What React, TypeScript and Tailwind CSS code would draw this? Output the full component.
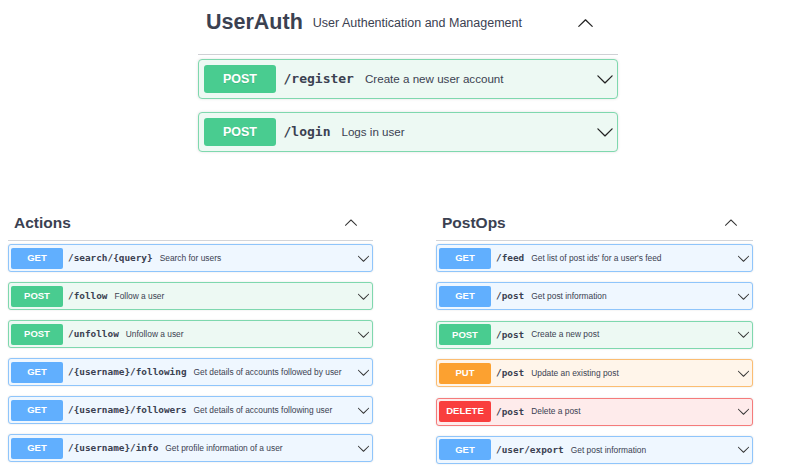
import clsx from 'clsx'

// ── Method colours (swagger-ish) ──────────────────────────────

type Method = 'GET' | 'POST' | 'PUT' | 'DELETE'

const methodCls: Record<Method, { badge: string; row: string }> = {
  GET: { badge: 'bg-[#61affe]', row: 'border-[#8fc5fb] bg-[#eff7ff]' },
  POST: { badge: 'bg-[#49cc90]', row: 'border-[#7fd8ae] bg-[#edf9f3]' },
  PUT: { badge: 'bg-[#fca130]', row: 'border-[#fbbd72] bg-[#fff5ea]' },
  DELETE: { badge: 'bg-[#f93e3e]', row: 'border-[#f57b7b] bg-[#feebeb]' },
}

const monoCls = "font-['DejaVu_Sans_Mono',monospace] font-bold"

const ARROW =
  'M17.418 6.109c.272-.268.709-.268.979 0s.271.701 0 .969l-7.908 7.83c-.27.268-.707.268-.979 0l-7.908-7.83c-.27-.268-.27-.701 0-.969.271-.268.709-.268.979 0L10 13.25l7.418-7.141z'

function Arrow({ size, up, className }: { size: number; up?: boolean; className?: string }) {
  return (
    <svg
      viewBox="0 0 20 20"
      width={size}
      height={size}
      fill="currentColor"
      className={clsx('shrink-0', up && 'rotate-180', className)}
    >
      <path d={ARROW} />
    </svg>
  )
}

interface Op {
  method: Method
  path: string
  summary: string
}

// ── Big rows (UserAuth) ───────────────────────────────────────

function BigRow({ method, path, summary }: Op) {
  const c = methodCls[method]
  return (
    <div
      className={clsx(
        'flex h-[40px] items-center rounded-[4px] border pl-[5px] pr-[3px] shadow-[0_0_3px_rgba(0,0,0,0.12)]',
        c.row,
      )}
    >
      <span
        className={clsx(
          'flex h-[28px] w-[72px] items-center justify-center rounded-[3px] text-[12.5px] font-bold text-white [text-shadow:0_1px_0_rgba(0,0,0,0.1)]',
          c.badge,
        )}
      >
        {method}
      </span>
      <span className={clsx('ml-[7.5px] text-[13px]', monoCls)}>{path}</span>
      <span className="ml-[11px] text-[11.6px]">{summary}</span>
      <Arrow size={18} className="ml-auto text-[#222]" />
    </div>
  )
}

// ── Small rows (Actions / PostOps) ────────────────────────────

function SmallRow({ method, path, summary }: Op) {
  const c = methodCls[method]
  return (
    <div
      className={clsx(
        'flex h-[28px] items-center rounded-[3px] border pl-[2px] pr-[2px] shadow-[0_0_2px_rgba(0,0,0,0.12)]',
        c.row,
      )}
    >
      <span
        className={clsx(
          'flex h-[21px] w-[52px] items-center justify-center rounded-[2px] text-[9.5px] font-bold text-white',
          c.badge,
        )}
      >
        {method}
      </span>
      <span className={clsx('ml-[5px] text-[9.4px]', monoCls)}>{path}</span>
      <span className="ml-[7px] text-[8.4px]">{summary}</span>
      <Arrow size={13} className="ml-auto text-[#333]" />
    </div>
  )
}

function SmallSection({
  title,
  ops,
  className,
  gapCls,
}: {
  title: string
  ops: Op[]
  className: string
  gapCls: string
}) {
  return (
    <section className={className}>
      <div className="flex h-[29px] items-start border-b border-[#d3d5d9] pl-[6px] pr-[15px] pt-[1px]">
        <div className="flex h-[20px] flex-1 items-center">
          <h3 className="text-[15.5px] font-bold leading-none">{title}</h3>
        </div>
        <div className="flex h-[20px] items-center">
          <Arrow size={14} up className="text-[#333]" />
        </div>
      </div>
      <div className={clsx('mt-[3px] flex flex-col', gapCls)}>
        {ops.map(op => (
          <SmallRow key={op.method + op.path + op.summary} {...op} />
        ))}
      </div>
    </section>
  )
}

const authOps: Op[] = [
  { method: 'POST', path: '/register', summary: 'Create a new user account' },
  { method: 'POST', path: '/login', summary: 'Logs in user' },
]

const actionOps: Op[] = [
  { method: 'GET', path: '/search/{query}', summary: 'Search for users' },
  { method: 'POST', path: '/follow', summary: 'Follow a user' },
  { method: 'POST', path: '/unfollow', summary: 'Unfollow a user' },
  { method: 'GET', path: '/{username}/following', summary: 'Get details of accounts followed by user' },
  { method: 'GET', path: '/{username}/followers', summary: 'Get details of accounts following user' },
  { method: 'GET', path: '/{username}/info', summary: 'Get profile information of a user' },
]

const postOps: Op[] = [
  { method: 'GET', path: '/feed', summary: "Get list of post ids' for a user's feed" },
  { method: 'GET', path: '/post', summary: 'Get post information' },
  { method: 'POST', path: '/post', summary: 'Create a new post' },
  { method: 'PUT', path: '/post', summary: 'Update an existing post' },
  { method: 'DELETE', path: '/post', summary: 'Delete a post' },
  { method: 'GET', path: '/user/export', summary: 'Get post information' },
]

export default function App() {
  return (
    <div className="h-[476px] w-[800px] overflow-hidden bg-white font-['Liberation_Sans',Arial,sans-serif] text-[#3b4151]">
      {/* UserAuth */}
      <section className="ml-[198px] w-[420px]">
        <div className="flex items-center border-b border-[#cfd1d5] pb-[18px] pl-[8px] pr-[24px] pt-[10px]">
          <div className="flex h-[26px] flex-1 items-center">
            <h2 className="text-[21.5px] font-bold leading-none">UserAuth</h2>
            <span className="ml-[10px] text-[12.5px]">User Authentication and Management</span>
          </div>
          <Arrow size={17} up className="text-[#222]" />
        </div>
        <div className="mt-[4px] flex flex-col gap-[13px]">
          {authOps.map(op => (
            <BigRow key={op.path} {...op} />
          ))}
        </div>
      </section>

      <div className="mt-[60px] flex">
        <SmallSection title="Actions" ops={actionOps} className="ml-[8px] w-[365px]" gapCls="gap-[10px]" />
        <SmallSection title="PostOps" ops={postOps} className="ml-[63px] w-[317px]" gapCls="gap-[10.4px]" />
      </div>
    </div>
  )
}
